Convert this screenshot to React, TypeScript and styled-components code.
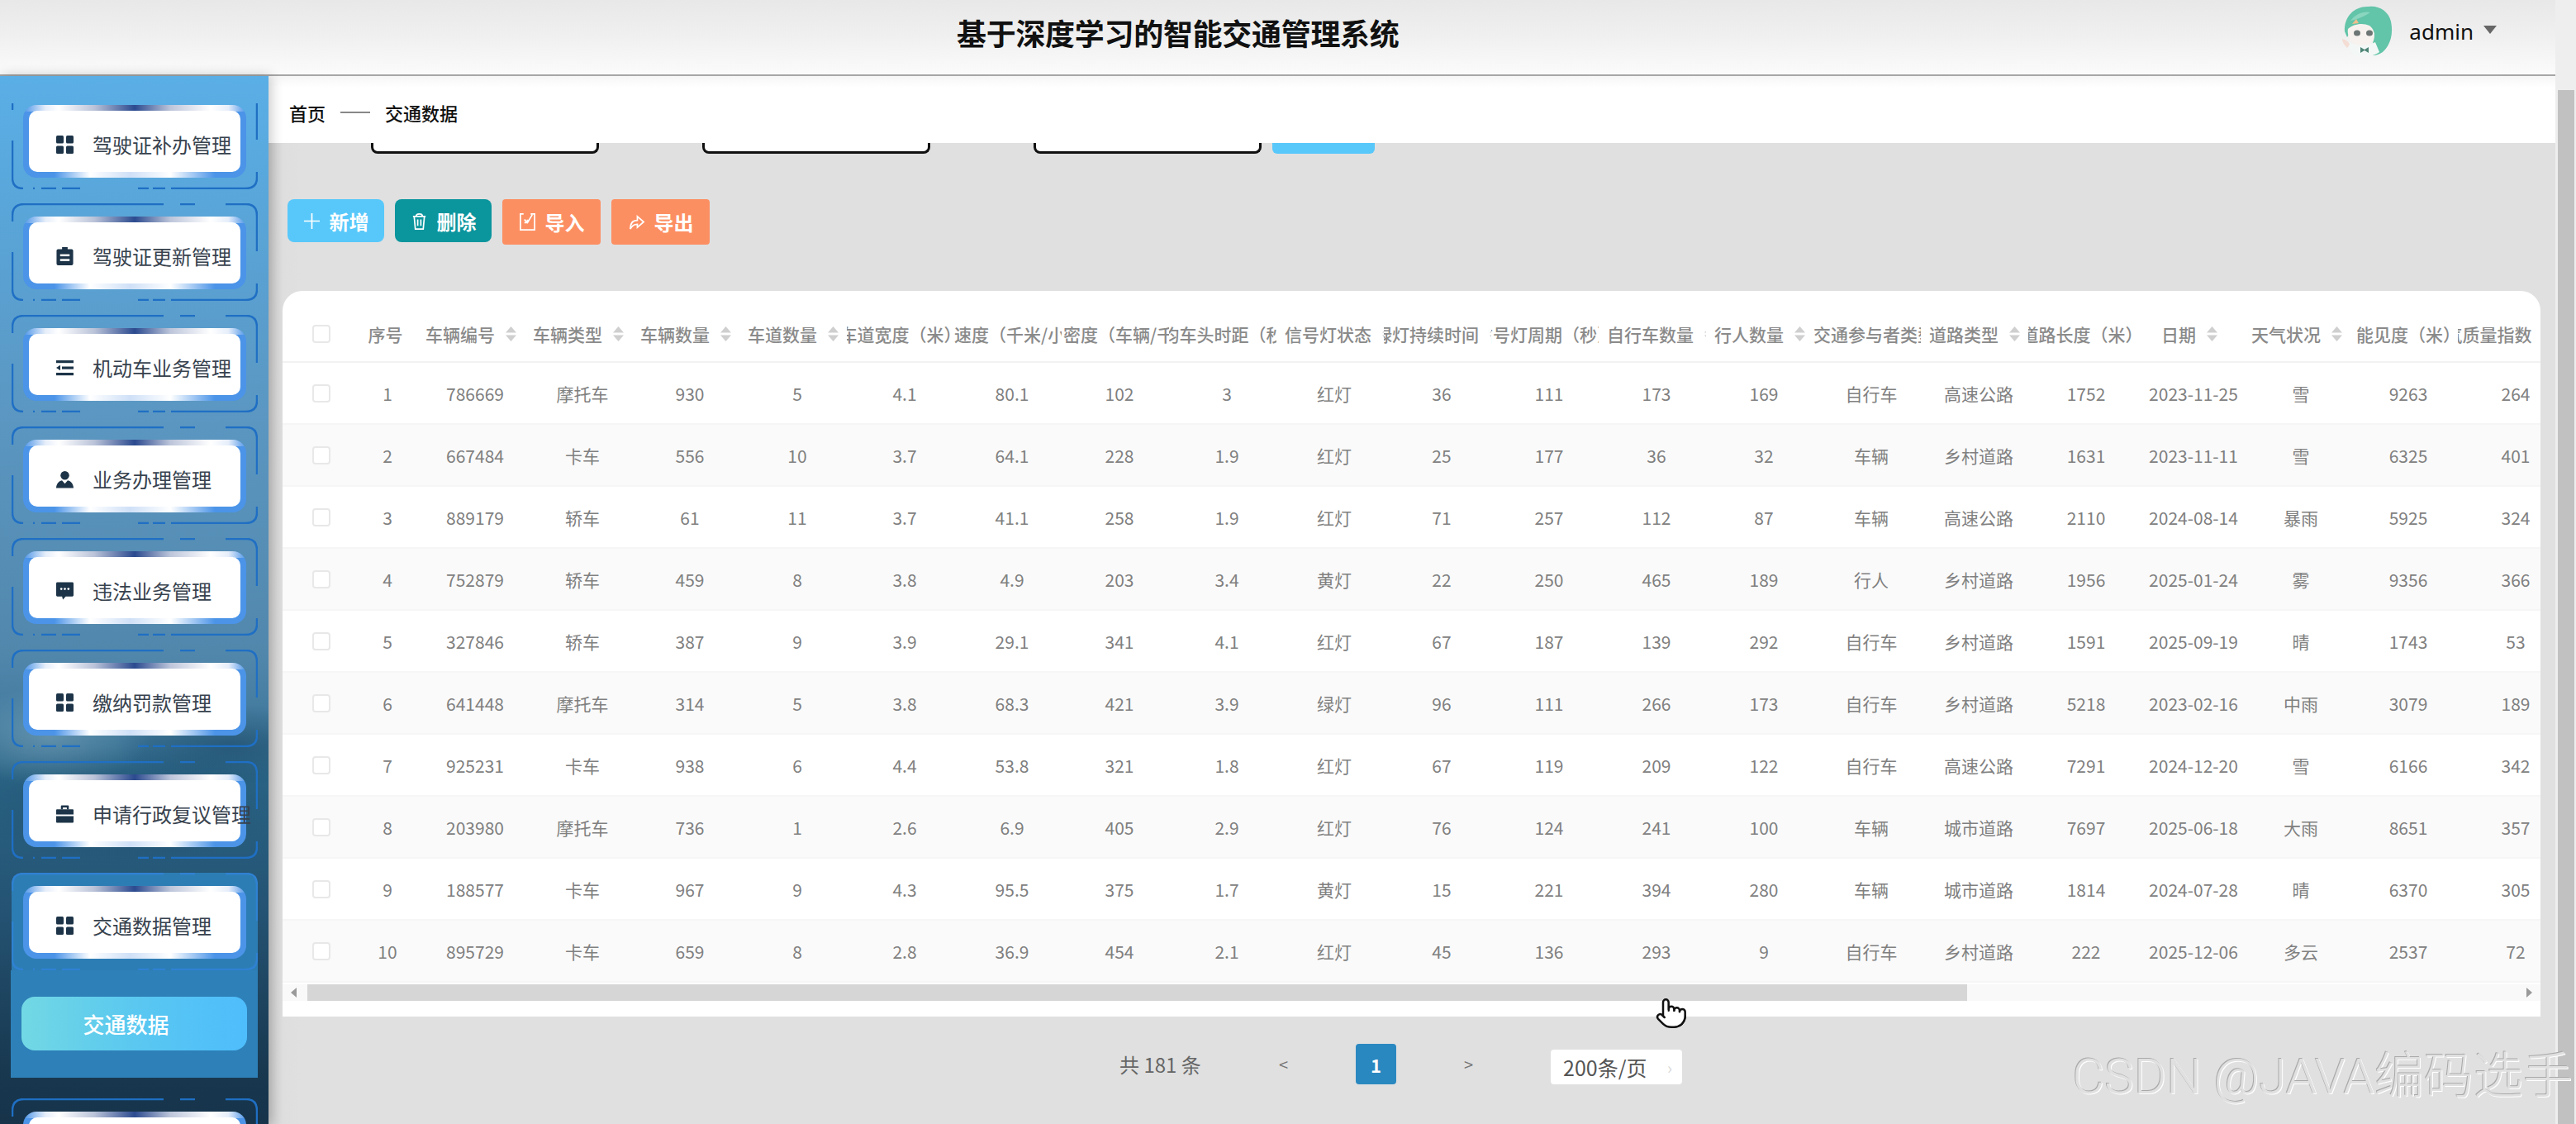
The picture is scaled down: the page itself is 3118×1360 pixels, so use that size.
import React from 'react';
import styled, { createGlobalStyle } from 'styled-components';
import { Pointer } from 'lucide-react';

const FONT = '"Noto Sans CJK SC", "Noto Sans", sans-serif';

const GlobalStyle = createGlobalStyle`
  html, body {
    margin: 0;
    padding: 0;
    overflow: hidden;
    background: #e0e0e0;
    font-family: ${FONT};
  }
  * {
    box-sizing: border-box;
  }
`;

type IconName = 'grid' | 'clipboard' | 'list' | 'user' | 'message' | 'briefcase';

const MenuIcon = ({ name }: { name: IconName }) => {
  if (name === 'grid') {
    return (
      <IconSvg viewBox="0 0 21 22">
        <rect x="0" y="0" width="9" height="9.5" rx="1.5" />
        <rect x="12" y="0" width="9" height="9.5" rx="1.5" />
        <rect x="0" y="12.5" width="9" height="9.5" rx="1.5" />
        <rect x="12" y="12.5" width="9" height="9.5" rx="1.5" />
      </IconSvg>
    );
  }
  if (name === 'clipboard') {
    return (
      <IconSvg viewBox="0 0 21 23">
        <path d="M7 0h7v2.5h5a2 2 0 0 1 2 2V21a2 2 0 0 1-2 2H2a2 2 0 0 1-2-2V4.5a2 2 0 0 1 2-2h5z" />
        <rect x="4.5" y="9" width="12" height="2.6" fill="#fff" />
        <rect x="4.5" y="15" width="12" height="2.6" fill="#fff" />
      </IconSvg>
    );
  }
  if (name === 'list') {
    return (
      <IconSvg viewBox="0 0 21 22">
        <rect x="0" y="2" width="21" height="3.2" />
        <rect x="7" y="9.5" width="14" height="3.2" />
        <path d="M0 11l5-3.2v6.4z" />
        <rect x="0" y="17" width="21" height="3.2" />
      </IconSvg>
    );
  }
  if (name === 'user') {
    return (
      <IconSvg viewBox="0 0 24 24">
        <circle cx="12" cy="6.5" r="6" />
        <path d="M0 24c.4-6 3.5-9.5 8-10.5l4 4.5 4-4.5c4.500 1 7.600 4.500 8 10.500z" />
      </IconSvg>
    );
  }
  if (name === 'message') {
    return (
      <IconSvg viewBox="0 0 22 22">
        <path d="M1.500 0h19A1.500 1.500 0 0 1 22 1.500v15a1.500 1.500 0 0 1-1.500 1.500H12l-3.500 4-1-4h-6A1.500 1.500 0 0 1 0 16.500v-15A1.500 1.500 0 0 1 1.500 0z" />
        <circle cx="6.500" cy="8.500" r="1.400" fill="#fff" />
        <circle cx="11" cy="8.500" r="1.400" fill="#fff" />
        <circle cx="15.500" cy="8.500" r="1.400" fill="#fff" />
      </IconSvg>
    );
  }
  return (
    <IconSvg viewBox="0 0 22 22">
      <path d="M7 0h8a1 1 0 0 1 1 1v4h-2.500V2.500h-5V5H6V1a1 1 0 0 1 1-1z" />
      <path d="M1 5h20a1 1 0 0 1 1 1v5.500H0V6a1 1 0 0 1 1-1z" />
      <path d="M0 13.500h22V21a1 1 0 0 1-1 1H1a1 1 0 0 1-1-1z" />
    </IconSvg>
  );
};

const RingLines = ({ color }: { color: string }) => (
  <Ring viewBox="0 0 298 118" $color={color}>
    <path d="M1 22V15Q1 1 15 1H184M204 1H222M259 1H284Q297 1 297 15V58" />
    <path d="M297 97V104Q297 117 283 117H193M186 117H171M166 117H153" />
    <path d="M83 117H61M54 117H36M28 117H26M14 117Q1 117 1 104V59" />
  </Ring>
);

const SortArrows = () => (
  <SortSvg viewBox="0 0 13 18">
    <path d="M6.500 0L13 7.500H0z" />
    <path d="M6.500 18L0 10.500H13z" />
  </SortSvg>
);

const Avatar = () => (
  <AvatarSvg viewBox="0 0 65 65">
    <path d="M5 33C4 14 18 2 34 3c10-2 24 4 27 18 3 14 0 28-10 37-6 4-12 5-14 3l4-26C30 26 16 26 8 40z" fill="#62c4a8" />
    <path d="M12 20c6-8 16-12 24-10-6 4-14 8-24 10z" fill="#8ad6bf" />
    <path d="M9 30c6-6 18-8 26-4 6 4 7 12 5 18-3 7-22 8-27 1-3-4-5-10-4-15z" fill="#f8f2ee" />
    <path d="M14 24l5-6 3 5z" fill="#efbe8c" />
    <ellipse cx="20" cy="35" rx="4" ry="3.500" fill="#6d7674" />
    <ellipse cx="35" cy="35" rx="4" ry="3.500" fill="#6d7674" />
    <path d="M10 46c9 5 22 5 32 0l5 12c-8 6-24 7-32 2-3-4-5-9-5-14z" fill="#f3f8f6" />
    <path d="M24 52l5 3 5-3v7l-5-3-5 3z" fill="#4f8576" />
    <path d="M2 42c4 1 8 3 9 7l-3 4c-3-3-6-7-6-11z" fill="#f4ddd4" />
  </AvatarSvg>
);

const menu: { label: string; icon: IconName | null; active?: boolean }[] = [
  { label: '驾驶证补办管理', icon: 'grid' },
  { label: '驾驶证更新管理', icon: 'clipboard' },
  { label: '机动车业务管理', icon: 'list' },
  { label: '业务办理管理', icon: 'user' },
  { label: '违法业务管理', icon: 'message' },
  { label: '缴纳罚款管理', icon: 'grid' },
  { label: '申请行政复议管理', icon: 'briefcase' },
  { label: '交通数据管理', icon: 'grid', active: true },
  { label: '', icon: null },
];

const columns: { title: string; sort?: boolean; left?: number }[] = [
  { title: '车辆编号', sort: true },
  { title: '车辆类型', sort: true },
  { title: '车辆数量', sort: true },
  { title: '车道数量', sort: true },
  { title: '车道宽度（米）' },
  { title: '速度（千米/小时）', left: 0 },
  { title: '密度（车辆/千米）', left: 2 },
  { title: '平均车头时距（秒）' },
  { title: '信号灯状态', sort: true, left: 10 },
  { title: '绿灯持续时间', sort: true },
  { title: '信号灯周期（秒）' },
  { title: '自行车数量', sort: true, left: 10 },
  { title: '行人数量', sort: true },
  { title: '交通参与者类型', sort: true, left: 0 },
  { title: '道路类型', sort: true },
  { title: '道路长度（米）' },
  { title: '日期', sort: true },
  { title: '天气状况', sort: true },
  { title: '能见度（米）', left: 7 },
  { title: '空气质量指数（AQI）' },
];

const rows = [
  ['786669', '摩托车', '930', '5', '4.1', '80.1', '102', '3', '红灯', '36', '111', '173', '169', '自行车', '高速公路', '1752', '2023-11-25', '雪', '9263', '264'],
  ['667484', '卡车', '556', '10', '3.7', '64.1', '228', '1.9', '红灯', '25', '177', '36', '32', '车辆', '乡村道路', '1631', '2023-11-11', '雪', '6325', '401'],
  ['889179', '轿车', '61', '11', '3.7', '41.1', '258', '1.9', '红灯', '71', '257', '112', '87', '车辆', '高速公路', '2110', '2024-08-14', '暴雨', '5925', '324'],
  ['752879', '轿车', '459', '8', '3.8', '4.9', '203', '3.4', '黄灯', '22', '250', '465', '189', '行人', '乡村道路', '1956', '2025-01-24', '雾', '9356', '366'],
  ['327846', '轿车', '387', '9', '3.9', '29.1', '341', '4.1', '红灯', '67', '187', '139', '292', '自行车', '乡村道路', '1591', '2025-09-19', '晴', '1743', '53'],
  ['641448', '摩托车', '314', '5', '3.8', '68.3', '421', '3.9', '绿灯', '96', '111', '266', '173', '自行车', '乡村道路', '5218', '2023-02-16', '中雨', '3079', '189'],
  ['925231', '卡车', '938', '6', '4.4', '53.8', '321', '1.8', '红灯', '67', '119', '209', '122', '自行车', '高速公路', '7291', '2024-12-20', '雪', '6166', '342'],
  ['203980', '摩托车', '736', '1', '2.6', '6.9', '405', '2.9', '红灯', '76', '124', '241', '100', '车辆', '城市道路', '7697', '2025-06-18', '大雨', '8651', '357'],
  ['188577', '卡车', '967', '9', '4.3', '95.5', '375', '1.7', '黄灯', '15', '221', '394', '280', '车辆', '城市道路', '1814', '2024-07-28', '晴', '6370', '305'],
  ['895729', '卡车', '659', '8', '2.8', '36.9', '454', '2.1', '红灯', '45', '136', '293', '9', '自行车', '乡村道路', '222', '2025-12-06', '多云', '2537', '72'],
];

const App: React.FC = () => {
  return (
    <Page>
      <GlobalStyle />
      <Content>
        <Header>
          <Title>基于深度学习的智能交通管理系统</Title>
          <UserBox>
            <Avatar />
            <UserName>admin</UserName>
            <Caret />
          </UserBox>
        </Header>
        <Body>
          <Sidebar>
            <MenuList>
              {menu.map((item, i) => (
                <React.Fragment key={i}>
                  <MenuItem $active={item.active} $first={i === 0}>
                    <RingLines color={item.active ? '#2f82d2' : '#1f6fc4'} />
                    <Frame>
                      <MenuCard>
                        {item.icon && <MenuIcon name={item.icon} />}
                        <MenuLabel>{item.label}</MenuLabel>
                      </MenuCard>
                    </Frame>
                  </MenuItem>
                  {item.active && (
                    <SubMenu>
                      <SubItem>交通数据</SubItem>
                    </SubMenu>
                  )}
                </React.Fragment>
              ))}
            </MenuList>
          </Sidebar>
          <Main>
            <Breadcrumb>
              <span>首页</span>
              <CrumbDash />
              <span>交通数据</span>
            </Breadcrumb>
            <Workspace>
              <SearchRow>
                <SearchField>
                  <SearchInput />
                </SearchField>
                <SearchField>
                  <SearchInput />
                </SearchField>
                <SearchField $last>
                  <SearchInput />
                </SearchField>
                <SearchButton />
              </SearchRow>
              <Actions>
                <ActionButton $bg="#58c8fa">
                  <ActionIcon viewBox="0 0 22 22">
                    <path d="M11 1V21M1 11H21" />
                  </ActionIcon>
                  新增
                </ActionButton>
                <ActionButton $bg="#0b959d">
                  <ActionIcon viewBox="0 0 22 24">
                    <path d="M3 6H19M7 6C7 2 15 2 15 6M4.500 6L6 22H16L17.500 6M9 10V18M13 10V18" />
                  </ActionIcon>
                  删除
                </ActionButton>
                <ActionButton $bg="#fc8f62" $tall>
                  <ActionIcon viewBox="0 0 22 24">
                    <path d="M6 2H2V22H20V2H15M7 9L11 13L17 3M11 13H7M11 13V9" />
                  </ActionIcon>
                  导入
                </ActionButton>
                <ActionButton $bg="#fc8f62" $tall>
                  <ActionIcon viewBox="0 0 22 24">
                    <path d="M3 21C3 13 7 10 12 10V5L20 12L12 19V15C8 15 5 17 3 21Z" />
                  </ActionIcon>
                  导出
                </ActionButton>
              </Actions>
              <TableCard>
                <TableClip>
                  <HeadRow>
                    <CheckCell>
                      <CheckBox />
                    </CheckCell>
                    <HeadCell>
                      <span>序号</span>
                    </HeadCell>
                    {columns.map(col => (
                      <HeadCell key={col.title} $left={col.left}>
                        <span>{col.title}</span>
                        {col.sort && <SortArrows />}
                      </HeadCell>
                    ))}
                  </HeadRow>
                  {rows.map((row, i) => (
                    <BodyRow key={row[0]} $odd={i % 2 === 1}>
                      <CheckCell>
                        <CheckBox />
                      </CheckCell>
                      <BodyCell>{i + 1}</BodyCell>
                      {row.map((value, j) => (
                        <BodyCell key={j}>{value}</BodyCell>
                      ))}
                    </BodyRow>
                  ))}
                </TableClip>
                <HScroll>
                  <ScrollArrow viewBox="0 0 8 12">
                    <path d="M7 0V12L0 6z" />
                  </ScrollArrow>
                  <HThumb />
                  <ScrollArrow viewBox="0 0 8 12">
                    <path d="M1 0V12L8 6z" />
                  </ScrollArrow>
                </HScroll>
              </TableCard>
              <Pagination>
                <Total>共 181 条</Total>
                <PageArrow>&lt;</PageArrow>
                <PageNumber>1</PageNumber>
                <PageArrow>&gt;</PageArrow>
                <PageSize>
                  200条/页
                  <SizeChevron>›</SizeChevron>
                </PageSize>
              </Pagination>
            </Workspace>
          </Main>
        </Body>
      </Content>
      <ScrollTrack>
        <ScrollThumb />
      </ScrollTrack>
      <HandCursor>
        <Pointer size={40} fill="#fff" color="#111" strokeWidth={1.5} />
      </HandCursor>
      <Watermark>CSDN @JAVA编码选手</Watermark>
    </Page>
  );
};

export default App;

const Page = styled.div`
  position: relative;
  width: 3118px;
  height: 1360px;
  display: flex;
  overflow: hidden;
  background: #e0e0e0;
`;

const Content = styled.div`
  flex: 1;
  min-width: 0;
  display: flex;
  flex-direction: column;
`;

const Header = styled.header`
  height: 92px;
  flex-shrink: 0;
  display: flex;
  align-items: flex-start;
  padding-left: 1158px;
  background: linear-gradient(180deg, #e8e8e8 0%, #f0f0f0 50%, #fbfbfb 100%);
  border-bottom: 2px solid #a6a6a6;
`;

const Title = styled.h1`
  margin: 0;
  font-size: 36px;
  letter-spacing: -0.3px;
  line-height: 78px;
  font-weight: 700;
  color: #111;
  white-space: nowrap;
`;

const UserBox = styled.div`
  margin-left: auto;
  padding: 5px 71px 0 0;
  display: flex;
  align-items: center;
  height: 70px;
`;

const AvatarSvg = styled.svg`
  width: 65px;
  height: 65px;
  margin-right: 18px;
`;

const UserName = styled.span`
  font-family: 'Noto Sans', sans-serif;
  font-size: 26px;
  color: #111;
`;

const Caret = styled.span`
  width: 0;
  height: 0;
  margin: -4px 0 0 12px;
  border-left: 8px solid transparent;
  border-right: 8px solid transparent;
  border-top: 10px solid #666;
`;

const Body = styled.div`
  flex: 1;
  min-height: 0;
  display: flex;
`;

const Sidebar = styled.aside`
  position: relative;
  z-index: 2;
  width: 325px;
  flex-shrink: 0;
  padding-top: 33px;
  display: flex;
  flex-direction: column;
  box-shadow: 3px 0 14px rgba(0, 0, 0, 0.22);
  background:
    radial-gradient(ellipse 120px 60px at 60px 800px, rgba(190, 215, 225, 0.28), transparent),
    radial-gradient(ellipse 140px 50px at 280px 810px, rgba(20, 60, 90, 0.45), transparent),
    radial-gradient(ellipse 200px 70px at 150px 880px, rgba(20, 60, 90, 0.35), transparent),
    linear-gradient(
      180deg,
      #5aafe6 0%,
      #59a6da 12%,
      #5b97c2 32%,
      #5287ac 55%,
      #40799c 62%,
      #2a6485 67%,
      #245272 80%,
      #18384f 95%,
      #16334a 100%
    );
`;

const MenuList = styled.nav`
  flex: 1;
  min-height: 0;
  overflow: hidden;
  display: flex;
  flex-direction: column;
`;

const MenuItem = styled.div<{ $active?: boolean; $first?: boolean }>`
  position: relative;
  flex-shrink: 0;
  width: 298px;
  height: 118px;
  margin: ${p => (p.$first ? '-14px' : '0')} 0 ${p => (p.$active ? '0' : '17px')} 14px;
  padding: 16px 14px 14px;
  background: ${p => (p.$active ? '#2d7db5' : 'transparent')};
  border-radius: ${p => (p.$active ? '18px 18px 0 0' : '0')};
`;

const Ring = styled.svg<{ $color: string }>`
  position: absolute;
  left: 0;
  top: 0;
  width: 298px;
  height: 118px;
  fill: none;
  stroke: ${p => p.$color};
  stroke-width: 2.5;
`;

const Frame = styled.div`
  height: 88px;
  padding: 7px;
  border-radius: 16px;
  background:
    linear-gradient(90deg, #4b94e8 0%, #e6eefa 10%, #ffffff 16%, #b9c2d8 32%, #2b4a8f 50%, #bcc5da 66%, #ffffff 84%, #e6eefa 92%, #4b94e8 100%) top / 100% 8px no-repeat,
    linear-gradient(90deg, #4b94e8 0%, #4b94e8 14%, #ffffff 30%, #cfe0f7 48%, #ffffff 66%, #4b94e8 86%, #4b94e8 100%) bottom / 100% 8px no-repeat,
    #4b94e8;
`;

const MenuCard = styled.div`
  height: 74px;
  padding: 7px 0 0 33px;
  display: flex;
  align-items: center;
  gap: 23px;
  border-radius: 10px;
  background: #fff;
`;

const IconSvg = styled.svg`
  width: 21px;
  height: 22px;
  flex-shrink: 0;
  fill: #1d3448;
`;

const MenuLabel = styled.span`
  font-size: 24px;
  line-height: 30px;
  color: #37424e;
  white-space: nowrap;
`;

const SubMenu = styled.div`
  flex-shrink: 0;
  width: 299px;
  height: 130px;
  margin: 0 0 25px 13px;
  padding: 32px 13px 0;
  background: #2e80b8;
`;

const SubItem = styled.div`
  height: 65px;
  padding-right: 20px;
  display: flex;
  align-items: center;
  justify-content: center;
  border-radius: 16px;
  background: linear-gradient(90deg, #72d8e4 0%, #5ac8f0 50%, #4ebdfc 100%);
  font-size: 26px;
  font-weight: 500;
  color: #fff;
`;

const Main = styled.main`
  flex: 1;
  min-width: 0;
  display: flex;
  flex-direction: column;
  background: linear-gradient(90deg, #cfcfcf 0, #dedede 17px, #e0e0e0 40px);
`;

const Breadcrumb = styled.div`
  height: 81px;
  flex-shrink: 0;
  padding: 7px 0 0 25px;
  display: flex;
  align-items: center;
  background: linear-gradient(180deg, #f6f6f6 0, #fff 14px);
  font-size: 22px;
  font-weight: 500;
  color: #111;
`;

const CrumbDash = styled.i`
  width: 36px;
  height: 2px;
  margin: 0 18px;
  background: #888;
`;

const Workspace = styled.div`
  flex: 1;
  padding: 0 18px 0 17px;
`;

const SearchRow = styled.div`
  height: 13px;
  padding-left: 107px;
  display: flex;
  align-items: flex-end;
`;

const SearchField = styled.div<{ $last?: boolean }>`
  width: ${p => (p.$last ? '289px' : '401px')};
  height: 13px;
`;

const SearchInput = styled.div`
  width: 276px;
  height: 13px;
  background: #fff;
  border: 3px solid #111;
  border-top: 0;
  border-radius: 0 0 8px 8px;
`;

const SearchButton = styled.div`
  width: 124px;
  height: 13px;
  background: #58c8fa;
  border-radius: 0 0 6px 6px;
`;

const Actions = styled.div`
  height: 55px;
  margin-top: 55px;
  display: flex;
  align-items: flex-start;
  padding-left: 6px;
  gap: 13px;
`;

const ActionButton = styled.button<{ $bg: string; $tall?: boolean }>`
  width: ${p => (p.$tall ? '119px' : '117px')};
  height: ${p => (p.$tall ? '55px' : '52px')};
  padding: 0;
  display: flex;
  align-items: center;
  justify-content: center;
  gap: 11px;
  border: 0;
  border-radius: ${p => (p.$tall ? '4px' : '8px')};
  background: ${p => p.$bg};
  font-family: ${FONT};
  font-size: 24px;
  font-weight: 700;
  color: #fff;
`;

const ActionIcon = styled.svg`
  width: 21px;
  height: 23px;
  fill: none;
  stroke: #fff;
  stroke-width: 1.8;
`;

const TableCard = styled.section`
  height: 878px;
  margin-top: 56px;
  border-radius: 24px 24px 0 0;
  background: #fff;
  overflow: hidden;
`;

const TableClip = styled.div`
  overflow: hidden;
`;

const HeadRow = styled.div`
  display: grid;
  grid-template-columns: 86px 77px repeat(20, 130px);
  width: max-content;
  height: 87px;
  padding-top: 18px;
  border-bottom: 2px solid #f2f2f2;
`;

const BodyRow = styled.div<{ $odd?: boolean }>`
  display: grid;
  grid-template-columns: 86px 82px repeat(20, 130px);
  width: max-content;
  height: 75px;
  background: ${p => (p.$odd ? '#fafafa' : '#fff')};
  border-bottom: 2px solid #f6f6f6;
`;

const CheckCell = styled.div`
  display: flex;
  align-items: center;
  padding-left: 36px;
`;

const CheckBox = styled.span`
  width: 22px;
  height: 22px;
  border: 2px solid #e8e8e8;
  border-radius: 4px;
  background: #fff;
`;

const HeadCell = styled.div<{ $left?: number }>`
  display: flex;
  align-items: center;
  justify-content: ${p => (p.$left === undefined ? 'center' : 'flex-start')};
  padding-left: ${p => p.$left ?? 0}px;
  overflow: hidden;
  font-size: 21px;
  font-weight: 500;
  color: #8a8a8a;
  white-space: nowrap;

  span {
    flex-shrink: 0;
  }
`;

const SortSvg = styled.svg`
  width: 13px;
  height: 18px;
  margin-left: 13px;
  flex-shrink: 0;
  fill: #cfcfcf;
`;

const BodyCell = styled.div`
  display: flex;
  align-items: center;
  justify-content: center;
  font-size: 21px;
  color: #808080;
  white-space: nowrap;
`;

const HScroll = styled.div`
  height: 20px;
  margin-top: 2px;
  display: flex;
  align-items: center;
  background: #f9f9f9;
`;

const ScrollArrow = styled.svg`
  width: 8px;
  height: 12px;
  margin: 0 10px;
  flex-shrink: 0;
  fill: #9a9a9a;

  &:last-child {
    margin-left: auto;
  }
`;

const HThumb = styled.div`
  width: 2009px;
  height: 20px;
  margin-left: 2px;
  background: #d6d6d6;
`;

const Pagination = styled.div`
  height: 49px;
  margin-top: 33px;
  padding-left: 1013px;
  display: flex;
  align-items: center;
  font-size: 24px;
  color: #666;
`;

const Total = styled.span`
  width: 100px;
  white-space: nowrap;
`;

const PageArrow = styled.span`
  width: 49px;
  margin: 0 63px 0 74px;
  text-align: center;
  font-size: 20px;
  color: #777;

  & + & {
    margin: 0;
  }
`;

const PageNumber = styled.span`
  width: 49px;
  height: 49px;
  margin-right: -11px;
  display: flex;
  align-items: center;
  justify-content: center;
  border-radius: 4px;
  background: #2a88c0;
  font-weight: 700;
  font-size: 22px;
  color: #fff;
`;

const PageSize = styled.div`
  width: 159px;
  height: 42px;
  margin: 7px 0 0 12px;
  padding: 0 12px 0 15px;
  display: flex;
  align-items: center;
  justify-content: space-between;
  border-radius: 4px;
  background: #fff;
  font-size: 25px;
  color: #555;
  white-space: nowrap;
`;

const SizeChevron = styled.span`
  color: #d8d8d8;
  font-size: 20px;
`;

const ScrollTrack = styled.div`
  width: 25px;
  flex-shrink: 0;
  padding: 109px 2px 0 3px;
  background: #eeeeee;
`;

const ScrollThumb = styled.div`
  height: 100%;
  background: #c1c1c1;
`;

const HandCursor = styled.div`
  position: absolute;
  left: 2003px;
  top: 1206px;
  width: 40px;
  height: 40px;
`;

const Watermark = styled.div`
  position: absolute;
  right: 4px;
  top: 1268px;
  font-family: Roboto, 'Noto Sans CJK SC', sans-serif;
  font-size: 60px;
  font-weight: 300;
  line-height: 70px;
  white-space: nowrap;
  color: #e0e0e0;
  text-shadow: -1px -1px 0 #a9a9a9, 1px 1px 0 #fff;
`;
